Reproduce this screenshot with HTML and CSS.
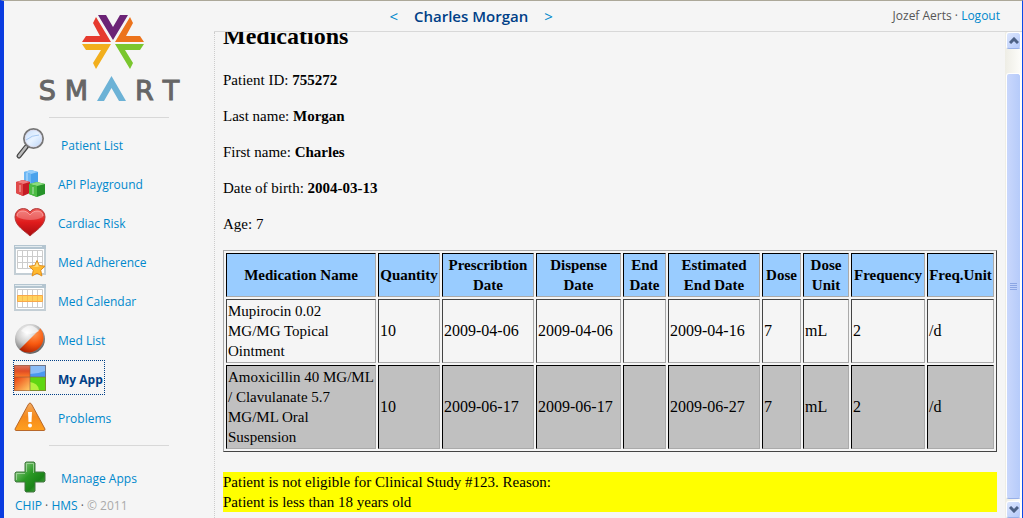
FILE: index.html
```html
<!DOCTYPE html>
<html lang="en">
<head>
  <meta charset="UTF-8">
  <title>SMART - My App</title>
  <meta name="viewport" content="width=device-width, initial-scale=1.0">
  <link rel="stylesheet" href="styles.css">
</head>
<body>
  <div class="sidebar">
    <div class="logo">
      <svg class="logo-star" width="62" height="54" viewBox="0 0 62 54">
        <path fill="#6b2376" d="M16 0h8l7 12 7-12h8L31 25z"/>
        <path fill="#e63a2e" d="M14 2l15 25H0l4-6h14L11 8z"/>
        <path fill="#ec731c" d="M48 2L33 27h29l-4-6H44l7-13z"/>
        <path fill="#f2af1d" d="M0 29h29L14 54l-3-6 8-13H4z"/>
        <path fill="#7ac62e" d="M62 29H33l15 25 3-6-8-13h15z"/>
      </svg>
      <div class="logo-word">
        <span>S</span><span>M</span>
        <svg width="29" height="25" viewBox="0 0 29 25"><path fill="#6cb2d6" d="M14.500 0L29 25h-7l-7.500-13L7 25H0z"/></svg>
        <span>R</span><span>T</span>
      </div>
    </div>
    <hr class="divider">
    <nav class="apps">
      <a class="app app-wide" href="#">
        <svg width="32" height="32" viewBox="0 0 32 32">
          <defs><linearGradient id="lens" x1="0" y1="0" x2="1" y2="1"><stop offset="0" stop-color="#c3dcfb"/><stop offset=".5" stop-color="#e9f3ff"/><stop offset="1" stop-color="#b5d2f8"/></linearGradient></defs>
          <path d="M5 28l8-10" stroke="#444" stroke-width="5" stroke-linecap="round"/>
          <path d="M5 28l7-9" stroke="#bbb" stroke-width="2.500" stroke-linecap="round"/>
          <circle cx="19.500" cy="10.500" r="9.500" fill="url(#lens)" stroke="#777" stroke-width="2"/>
          <path d="M12 12q6-5 13-5" stroke="#a5c8f2" fill="none"/>
          <circle cx="19.500" cy="10.500" r="8.300" fill="none" stroke="#dde" stroke-width="1"/>
        </svg>
        <span>Patient List</span>
      </a>
      <a class="app" href="#">
        <svg width="32" height="32" viewBox="0 0 32 32">
          <path fill="#4aa2ec" d="M10 5l7-2 7 2v10l-7 2-7-2z"/><path fill="#94cdfa" d="M10 5l7-2 7 2-7 2z"/><path fill="#6bb6f4" d="M10 5l7 2v10l-7-2z"/>
          <path fill="#c51c24" d="M2 15l7-2 7 2v11l-7 3-7-3z"/><path fill="#ef7d7d" d="M2 15l7-2 7 2-7 2z"/><path fill="#e04a4a" d="M2 15l7 2v12l-7-3z"/>
          <path fill="#26932a" d="M15 17l8-2 8 2v10l-8 3-8-3z"/><path fill="#8bdc7d" d="M15 17l8-2 8 2-8 2z"/><path fill="#4dbc44" d="M15 17l8 2v11l-8-3z"/>
          <path d="M6 18v7M19 20v7M13 6v8" stroke="#fff" opacity=".6"/>
        </svg>
        <span>API Playground</span>
      </a>
      <a class="app" href="#">
        <svg width="32" height="32" viewBox="0 0 32 32">
          <defs><linearGradient id="heart" x1="0" y1="0" x2="0" y2="1"><stop offset="0" stop-color="#ef5d57"/><stop offset=".5" stop-color="#e01c1c"/><stop offset="1" stop-color="#a90c10"/></linearGradient></defs>
          <path fill="url(#heart)" stroke="#b13a3a" d="M16 30C11 25 1 20 1 11 1 2 12 0 16 6c4-6 15-4 15 5 0 9-10 14-15 19z"/>
          <path fill="#fff" opacity=".25" d="M3 11c0-7 9-8 13-2 4-6 13-5 13 2-7 4-18 4-26 0z"/>
          <path fill="none" stroke="#fbb" opacity=".7" d="M3 10c0-6 9-7 13-1 4-6 13-5 13 1"/>
        </svg>
        <span>Cardiac Risk</span>
      </a>
      <a class="app" href="#">
        <svg width="32" height="32" viewBox="0 0 32 32">
          <path fill="#fff" stroke="#c3ced5" stroke-width="2" d="M1 1h30v28H1z"/>
          <path fill="#b4c5d0" d="M0 0h32v4H0z"/><path fill="#e3ebef" d="M1 1h27v1H1z"/>
          <path fill="none" stroke="#ccc" d="M3.500 5.500h25v18h-25zM3.500 11.500h25M3.500 17.500h25M8.500 5v18M13.500 5v18M18.500 5v18M23.500 5v18"/>
          <path fill="#ffb92e" stroke="#df8e1e" stroke-linejoin="round" d="M23 15.500l2.300 5 5.700.7-4.300 4 1.200 5.800-4.900-2.800-4.900 2.800 1.200-5.800-4.300-4 5.700-.7z"/>
          <path fill="#ffe187" d="M23 17l1.800 4.500h4L18 22l3.300-1z"/>
        </svg>
        <span>Med Adherence</span>
      </a>
      <a class="app" href="#">
        <svg width="32" height="32" viewBox="0 0 32 32">
          <path fill="#fff" stroke="#c3ced5" stroke-width="2" d="M1 1h30v25H1z"/>
          <path fill="#b4c5d0" d="M0 0h32v4H0z"/><path fill="#e3ebef" d="M1 1h27v1H1z"/>
          <path fill="none" stroke="#ccc" d="M3.500 5.500h25v18h-25zM8.500 6v18M13.500 6v18M18.500 6v18M23.500 6v18"/>
          <path fill="#ffd35e" stroke="#f8a84a" d="M3.500 11.500h25v6h-25z"/><path stroke="#f9bb53" d="M8.500 12v5M13.500 12v5M18.500 12v5M23.500 12v5"/>
        </svg>
        <span>Med Calendar</span>
      </a>
      <a class="app" href="#">
        <svg width="32" height="32" viewBox="0 0 32 32">
          <defs>
            <radialGradient id="pill" cx=".4" cy=".3" r=".7"><stop offset="0" stop-color="#fff"/><stop offset=".5" stop-color="#ccc"/><stop offset="1" stop-color="#666"/></radialGradient>
            <radialGradient id="pill-red" cx=".6" cy=".2" r=".9"><stop offset="0" stop-color="#ff9a55"/><stop offset=".5" stop-color="#f8590f"/><stop offset="1" stop-color="#a91d00"/></radialGradient>
          </defs>
          <circle cx="16" cy="16" r="15" fill="url(#pill)"/>
          <path fill="url(#pill-red)" d="M26.500 5.500A15 15 0 0 1 5.500 26.500z"/>
          <path fill="#fff" opacity=".6" d="M7 8q9-11 18 0-9 6-18 0z"/>
        </svg>
        <span>Med List</span>
      </a>
      <a class="app app-active" href="#">
        <svg width="32" height="32" viewBox="0 0 32 32">
          <defs>
            <linearGradient id="win-red" x1="0" y1="0" x2="0" y2="1"><stop offset="0" stop-color="#d77a68"/><stop offset=".5" stop-color="#df4c26"/><stop offset="1" stop-color="#ff7b25"/></linearGradient>
            <linearGradient id="win-warm" x1="1" y1="1" x2="0" y2="0"><stop offset="0" stop-color="#ffd36b"/><stop offset="1" stop-color="#ec3a0c"/></linearGradient>
          </defs>
          <path fill="url(#win-red)" d="M0 3h16v12H0z"/>
          <path fill="url(#win-warm)" d="M0 15h16v14H0z"/>
          <path fill="#4a98f0" d="M16 3h16v12H16z"/><path fill="#8cbdf6" d="M16 4h15v5q-7 3-15 3z"/>
          <path fill="#5fd612" d="M16 15h16v14H16z"/><path fill="#b4f13e" d="M16 20q8 1 9 8h-9z"/>
          <path stroke="#8d5a3e" stroke-opacity=".6" fill="none" d="M.500 3.500h31v25H.500zM16 4v24M1 15h30"/>
        </svg>
        <span>My App</span>
      </a>
      <a class="app" href="#">
        <svg width="32" height="32" viewBox="0 0 32 32">
          <defs><linearGradient id="warn" x1="0" y1="0" x2="0" y2="1"><stop offset="0" stop-color="#f3ab62"/><stop offset=".5" stop-color="#f58a1c"/><stop offset="1" stop-color="#ffa01f"/></linearGradient></defs>
          <path fill="url(#warn)" stroke="#b8682a" stroke-linejoin="round" d="M16 2q1 0 2 2l13 24q0 1.500-1 1.500H2q-1 0-1-1.500L14 4q1-2 2-2z"/>
          <path fill="#fff" d="M14 11h4l-.500 10h-3z"/><circle cx="16" cy="24.500" r="2" fill="#fff"/>
        </svg>
        <span>Problems</span>
      </a>
    </nav>
    <hr class="divider">
    <a class="app app-wide manage" href="#">
      <svg width="32" height="32" viewBox="0 0 32 32">
        <defs><linearGradient id="plus" x1="0" y1="0" x2="1" y2="1"><stop offset="0" stop-color="#a5d59c"/><stop offset=".45" stop-color="#2b9a25"/><stop offset=".7" stop-color="#1a8418"/><stop offset="1" stop-color="#74bc69"/></linearGradient></defs>
        <path fill="url(#plus)" stroke="#447743" stroke-linejoin="round" d="M12 1h8l1 1v9h9l1 1v8l-1 1h-9v9l-1 1h-8l-1-1v-9H2l-1-1v-8l1-1h9V2z"/>
        <path fill="none" stroke="#c4e8bf" opacity=".6" d="M12.500 11V2.500h7V12M2.500 19v-6.500H11"/>
      </svg>
      <span>Manage Apps</span>
    </a>
    <div class="credits"><a href="#">CHIP</a> · <a href="#">HMS</a> · <span>© 2011</span></div>
  </div>

  <div class="page">
    <div class="topbar">
      <div class="patient">
        <a href="#">&lt;</a>
        <span class="patient-name">Charles Morgan</span>
        <a href="#">&gt;</a>
      </div>
      <div class="user">Jozef Aerts · <a href="#">Logout</a></div>
    </div>
    <div class="view">
      <main class="content">
        <h2>Medications</h2>
        <p>Patient ID: <b>755272</b></p>
        <p>Last name: <b>Morgan</b></p>
        <p>First name: <b>Charles</b></p>
        <p>Date of birth: <b>2004-03-13</b></p>
        <p>Age: 7</p>
        <table class="meds">
          <colgroup>
            <col>
            <col class="c-quantity">
            <col class="c-date">
            <col class="c-dispense">
            <col class="c-end">
            <col class="c-date">
            <col class="c-dose">
            <col class="c-unit">
            <col class="c-freq">
            <col class="c-frequnit">
          </colgroup>
          <tr>
            <th>Medication Name</th><th>Quantity</th><th>Prescribtion Date</th><th>Dispense Date</th><th>End Date</th>
            <th>Estimated End Date</th><th>Dose</th><th>Dose Unit</th><th>Frequency</th><th>Freq.Unit</th>
          </tr>
          <tr>
            <td class="name">Mupirocin 0.02 MG/MG Topical Ointment</td><td>10</td><td>2009-04-06</td><td>2009-04-06</td><td></td>
            <td>2009-04-16</td><td>7</td><td>mL</td><td>2</td><td>/d</td>
          </tr>
          <tr class="alt">
            <td class="name">Amoxicillin 40 MG/ML / Clavulanate 5.7 MG/ML Oral Suspension</td><td>10</td><td>2009-06-17</td><td>2009-06-17</td><td></td>
            <td>2009-06-27</td><td>7</td><td>mL</td><td>2</td><td>/d</td>
          </tr>
        </table>
        <div class="notice">Patient is not eligible for Clinical Study #123. Reason:<br>Patient is less than 18 years old</div>
      </main>
      <div class="scrollbar">
        <button class="scroll-btn" aria-label="Scroll up"><svg width="10" height="7" viewBox="0 0 10 7"><path d="M1 6l4-4 4 4"/></svg></button>
        <div class="scroll-thumb"><i></i><i></i><i></i><i></i></div>
        <button class="scroll-btn" aria-label="Scroll down"><svg width="10" height="7" viewBox="0 0 10 7"><path d="M1 1l4 4 4-4"/></svg></button>
      </div>
    </div>
  </div>
</body>
</html>
```
FILE: styles.css
```css
* { box-sizing: border-box; }
body {
  margin: 0;
  height: 100vh;
  display: flex;
  overflow: hidden;
  background: #f5f5f5;
  border-top: 1px solid #aca899;
  border-left: 4px solid #0a3ce0;
  border-right: 1px solid #0a4ae8;
  font-family: "Open Sans", "Noto Sans", sans-serif;
  font-size: 12px;
  line-height: 20px;
  color: #555;
}
a {
  color: #0088cc;
  text-decoration: none;
}

/* sidebar */
.sidebar {
  width: 210px;
  flex-shrink: 0;
  padding-top: 14px;
}
.logo {
  display: flex;
  flex-direction: column;
  align-items: center;
  gap: 7px;
  height: 102px;
}
.logo svg { display: block; }
.logo-star { margin-left: 8px; }
.logo-word {
  display: flex;
  align-items: flex-end;
  gap: 9px;
  font-family: "DejaVu Sans", sans-serif;
  font-size: 27px;
  line-height: 20px;
  color: #666;
  -webkit-text-stroke: 1px #666;
}
.divider {
  width: 120px;
  height: 1px;
  margin: 0 0 0 45px;
  border: 0;
  background: #d8d8d8;
}
.apps {
  display: flex;
  flex-direction: column;
  align-items: flex-start;
  gap: 6px;
  padding: 9px 0 12px 10px;
}
.app {
  display: flex;
  align-items: center;
  gap: 12px;
  height: 33px;
  padding-right: 1px;
}
.app span { padding-top: 4px; }
.app-wide { gap: 15px; }
.app-active {
  color: #003f87;
  font-weight: 700;
  outline: 1px dotted #003f87;
}
.manage { margin: 14px 0 0 10px; }
.credits {
  padding: 3px 0 0 11px;
}
.credits span { color: #aaa; }

/* top bar */
.page {
  flex: 1;
  min-width: 0;
  display: flex;
  flex-direction: column;
}
.topbar {
  display: grid;
  grid-template-columns: 7fr 4fr;
  align-items: center;
  height: 31px;
  flex-shrink: 0;
  border-bottom: 1px solid #d8d8d8;
}
.patient {
  display: flex;
  justify-content: center;
  align-items: center;
  gap: 16px;
  font-size: 15px;
}
.patient-name {
  font-weight: 600;
  color: #003f87;
}
.user {
  text-align: right;
  padding-right: 22px;
}

/* app view */
.view {
  flex: 1;
  min-height: 0;
  display: flex;
  border-left: 1px dotted #ccc;
}
.content {
  flex: 1;
  min-width: 0;
  overflow: hidden;
  padding: 0 8px;
  font-family: "Liberation Serif", serif;
  font-size: 15px;
  color: #000;
}
/* the app opens slightly scrolled down */
.content h2 {
  margin: -10px 0 20px;
  font-size: 24px;
  line-height: 28px;
}
.content p { margin: 0 0 16px; }
.meds {
  width: 100%;
  table-layout: fixed;
  border: 1px solid;
  border-color: #aaa #444 #444 #aaa;
  border-spacing: 2px;
}
.meds th, .meds td {
  padding: 1px;
  border: 1px solid;
  border-color: #444 #aaa #aaa #444;
}
.meds td { font-size: 16px; }
.meds .name { font-size: 15px; }
.meds th {
  background: #99ccff;
  border-color: #000 #aaa #aaa #000;
}
.meds .alt td {
  background: #c0c0c0;
  border-color: #000 #aaa #aaa #000;
}
.c-quantity { width: 62px; }
.c-date { width: 92px; }
.c-dispense { width: 85px; }
.c-end { width: 43px; }
.c-dose { width: 39px; }
.c-unit { width: 46px; }
.c-freq { width: 74px; }
.c-frequnit { width: 67px; }
.notice {
  margin-top: 20px;
  background: #ffff00;
}

/* scrollbar */
.scrollbar {
  width: 17px;
  flex-shrink: 0;
  display: flex;
  flex-direction: column;
  padding: 0 1px;
  background: linear-gradient(90deg, #eeede5, #fefefb);
}
.scroll-btn {
  height: 17px;
  padding: 0;
  display: flex;
  align-items: center;
  justify-content: center;
  border: 1px solid #fff;
  border-bottom-color: #98b0e8;
  border-radius: 3px;
  background: linear-gradient(135deg, #dce6fd, #b5cafa);
}
.scroll-btn path {
  fill: none;
  stroke: #4d6185;
  stroke-width: 3;
}
.scroll-thumb {
  flex: 1;
  margin: 24px 0 2px;
  display: flex;
  flex-direction: column;
  align-items: center;
  justify-content: center;
  gap: 1px;
  border: 1px solid #fff;
  border-bottom-color: #98b0e8;
  border-radius: 3px;
  background: linear-gradient(90deg, #c9d7fc, #b6cbfa);
}
.scroll-thumb i {
  width: 7px;
  height: 1px;
  background: #8ca6e4;
}
```
